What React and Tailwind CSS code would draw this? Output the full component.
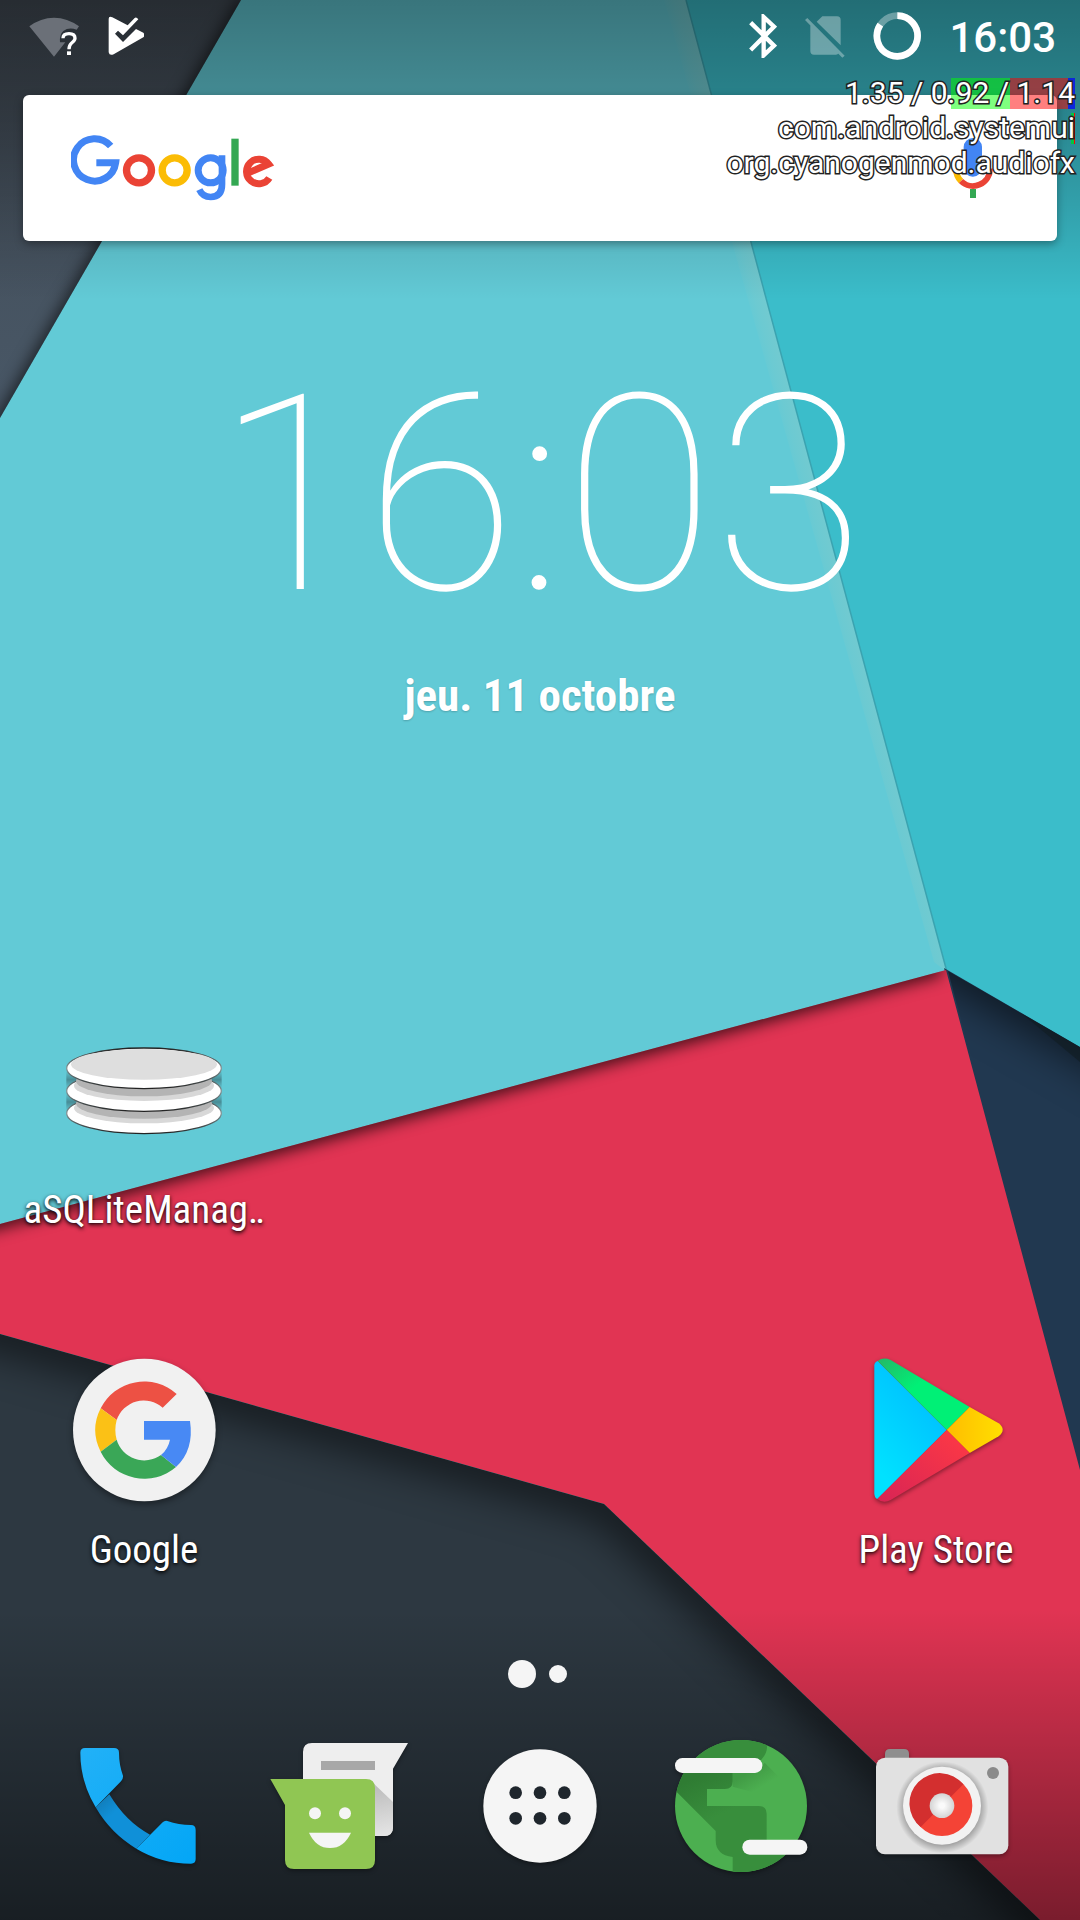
import React from "react";

const condensed = "font-['Roboto_Condensed','Liberation_Sans_Narrow',Roboto,sans-serif]";
const labelText =
  "mt-3 text-[39px] leading-[48px] text-white whitespace-nowrap [text-shadow:0_2px_4px_rgba(0,0,0,0.8),0_1px_2px_rgba(0,0,0,0.5)]";

function Wallpaper() {
  return (
    <svg
      className="absolute inset-0 h-full w-full"
      viewBox="0 0 1080 1920"
      preserveAspectRatio="none"
      aria-hidden="true"
    >
      <defs>
        <linearGradient id="slate" x1="0" y1="0" x2="0" y2="1">
          <stop offset="0" stopColor="#434c56" />
          <stop offset="1" stopColor="#485766" />
        </linearGradient>
        <linearGradient id="topScrim" x1="0" y1="0" x2="0" y2="1">
          <stop offset="0" stopColor="#000" stopOpacity="0.42" />
          <stop offset="0.4" stopColor="#000" stopOpacity="0.29" />
          <stop offset="1" stopColor="#000" stopOpacity="0" />
        </linearGradient>
        <linearGradient id="bottomScrim" x1="0" y1="0" x2="0" y2="1">
          <stop offset="0" stopColor="#000" stopOpacity="0" />
          <stop offset="1" stopColor="#000" stopOpacity="0.46" />
        </linearGradient>
        <linearGradient id="ridge" gradientUnits="userSpaceOnUse" x1="795" y1="490" x2="817" y2="484">
          <stop offset="0" stopColor="#62cad6" />
          <stop offset="0.5" stopColor="#6ccad2" />
          <stop offset="1" stopColor="#72cad0" />
        </linearGradient>
        <filter id="soft" filterUnits="userSpaceOnUse" x="-100" y="-100" width="1300" height="2140" colorInterpolationFilters="sRGB">
          <feGaussianBlur stdDeviation="8" />
        </filter>
        <filter id="wide" filterUnits="userSpaceOnUse" x="-100" y="-100" width="1300" height="2140" colorInterpolationFilters="sRGB">
          <feGaussianBlur stdDeviation="20" />
        </filter>
        <clipPath id="redClip">
          <polygon points="0,1224 946,970 1080,1470 1080,1920 1040,1920 604,1504 0,1334" />
        </clipPath>
        <clipPath id="darkClip">
          <polygon points="0,1334 604,1504 1040,1920 0,1920" />
        </clipPath>
        <clipPath id="navyClip">
          <polygon points="948,971 1080,1047 1080,1470" />
        </clipPath>
        <clipPath id="cornerClip">
          <polygon points="0,0 241,0 0,418" />
        </clipPath>
      </defs>
      <rect width="1080" height="1920" fill="#62cad6" />
      <polygon points="686,0 1080,0 1080,1048 947,972" fill="#3bbdca" />
      <polygon points="664,0 686,0 947,972 934,962" fill="url(#ridge)" />
      <line x1="686" y1="0" x2="947" y2="972" stroke="#3aa3b0" strokeWidth="1.5" />
      <polygon points="0,0 241,0 0,418" fill="url(#slate)" />
      <g clipPath="url(#cornerClip)">
        <line x1="249" y1="0" x2="-10" y2="448" stroke="#000" strokeOpacity="0.65" strokeWidth="18" filter="url(#soft)" />
      </g>
      <polygon points="944,968 1080,1047 1080,1480" fill="#213850" />
      <g clipPath="url(#navyClip)">
        <line x1="910" y1="930" x2="1150" y2="1068" stroke="#000" strokeOpacity="0.55" strokeWidth="60" filter="url(#wide)" />
        <polygon points="1020,1012 1080,1047 1080,1062" fill="#101c22" fillOpacity="0.6" />
      </g>
      <polygon points="0,1224 946,970 1080,1470 1080,1920 1040,1920 604,1504 0,1334" fill="#e13453" />
      <g clipPath="url(#redClip)">
        <line x1="-20" y1="1224" x2="940" y2="966" stroke="#000" strokeOpacity="0.75" strokeWidth="18" filter="url(#soft)" />
      </g>
      <polygon points="0,1334 604,1504 1040,1920 0,1920" fill="#2d3841" />
      <g clipPath="url(#darkClip)">
        <polyline points="-60,1312 608,1500 1110,1980" fill="none" stroke="#000" strokeOpacity="0.55" strokeWidth="44" filter="url(#wide)" />
      </g>
      <rect width="1080" height="300" fill="url(#topScrim)" />
      <rect y="1610" width="1080" height="310" fill="url(#bottomScrim)" />
    </svg>
  );
}

function StatusBar() {
  return (
    <header className="flex h-[72px] items-center justify-between pr-6 pl-7">
      <div className="flex items-center gap-7">
        <svg className="h-[42px] w-[52px]" viewBox="84 42 156 126" role="img" aria-label="Wi-Fi">
          <path
            d="M88 76Q122 50 162 50Q202 50 237 76L230 86Q206 78 190 90Q178 100 180 124H196L162 167Z"
            fill="#6b7078"
          />
          <path
            d="M189 112Q189 98 207 98Q225 98 225 112Q225 119 215 126Q207 132 207 145"
            fill="none"
            stroke="#fff"
            strokeWidth="10"
          />
          <rect x="201" y="151" width="12" height="11" fill="#fff" />
        </svg>
        <svg className="h-[42px] w-9" viewBox="325 45 108 126" role="img" aria-label="Update">
          <path
            d="M327 57Q327 47 338 52L384 76L405 54Q410 50 416 58L370 106L355 92L346 101L370 126L409 87L431 98Q438 105 431 112L342 163Q329 168 327 157Z"
            fill="#fff"
          />
        </svg>
      </div>
      <div className="flex items-center gap-7">
        <svg className="h-11 w-7" viewBox="210 43 84 132" role="img" aria-label="Bluetooth">
          <path
            d="M215 69L285 138L254 167V52L285 81L215 151"
            fill="none"
            stroke="#fff"
            strokeWidth="13"
          />
        </svg>
        <svg className="h-11 w-10" viewBox="373 43 120 132" role="img" aria-label="No SIM">
          <path
            d="M425 50H469Q480 50 480 61V137L408 66ZM389 73L473 161Q472 165 466 165H400Q389 165 389 154ZM380 55L492 168L485 174L373 61Z"
            fill="#fff"
            fillOpacity="0.33"
          />
        </svg>
        <svg className="h-12 w-12" viewBox="584 35 144 144" role="img" aria-label="Battery">
          <circle cx="657" cy="107" r="61" fill="none" stroke="#fff" strokeOpacity="0.33" strokeWidth="20" />
          <path d="M657 46A61 61 0 1 1 606 73" fill="none" stroke="#fff" strokeWidth="20" />
        </svg>
        <time className="pt-1 text-[42px] leading-none font-medium text-white">16:03</time>
      </div>
    </header>
  );
}

function GoogleLogo() {
  return (
    <svg className="h-[66px] w-[204px]" viewBox="212 404 612 198" fill="none" strokeWidth="21" role="img" aria-label="Google">
      <path d="M331 437A63.500 63.500 0 1 0 346 487H288" stroke="#4285f4" />
      <circle cx="416" cy="510" r="37.500" stroke="#ea4335" strokeWidth="22" />
      <circle cx="523" cy="510" r="37.500" stroke="#fbbc05" strokeWidth="22" />
      <circle cx="631" cy="510" r="37.500" stroke="#4285f4" />
      <path d="M665 465V552Q665 590 631 590Q607 590 597 568" stroke="#4285f4" strokeWidth="20" />
      <path d="M704 415V556" stroke="#34a853" strokeWidth="22" />
      <path d="M807 533A37 37 0 1 1 805 491L743 518" stroke="#ea4335" />
    </svg>
  );
}

function SearchBar() {
  return (
    <div className="mx-[23px] mt-[23px] flex h-[146px] items-center justify-between rounded-md bg-white pr-16 pl-12 shadow-[0_3px_8px_rgba(0,0,0,0.35)]">
      <button type="button" aria-label="Google">
        <GoogleLogo />
      </button>
      <button type="button" aria-label="Voice search">
        <svg className="h-[66px] w-10" viewBox="819 405 120 198" fill="none" aria-hidden="true">
          <rect x="851" y="414" width="55" height="116" rx="27" fill="#4285f4" />
          <path d="M828 506A51 51 0 0 0 843 543" stroke="#fbbc05" strokeWidth="18" />
          <path d="M843 543A51 51 0 0 0 930 506" stroke="#ea4335" strokeWidth="18" />
          <path d="M879 567V594" stroke="#34a853" strokeWidth="18" />
        </svg>
      </button>
    </div>
  );
}

function LoadOverlay() {
  const line =
    "relative text-right text-[30px] leading-[35px] text-white [paint-order:stroke_fill] [-webkit-text-stroke:3px_#222]";
  return (
    <aside className="pointer-events-none absolute top-[75px] right-[5px] z-10">
      <div className="absolute top-[3px] right-0 flex h-[31px]">
        <span className="w-[59px] bg-[#00ff00]/50" />
        <span className="w-[58px] bg-[#ff0000]/50" />
        <span className="w-[7px] bg-[#0000ff]/70" />
      </div>
      <div className="absolute top-[38px] right-0 flex h-[31px]">
        <span className="w-[3px] bg-[#00c840]" />
        <span className="w-[1px] bg-[#ff0000]" />
      </div>
      <p className={line}>1.35 / 0.92 / 1.14</p>
      <p className={line}>com.android.systemui</p>
      <p className={line}>org.cyanogenmod.audiofx</p>
    </aside>
  );
}

function DatabaseIcon() {
  return (
    <svg className="h-[168px] w-[168px]" viewBox="180 -42 504 504" aria-hidden="true">
      <defs>
        <linearGradient id="rim" x1="0" y1="0" x2="0" y2="1">
          <stop offset="0" stopColor="#222" />
          <stop offset="0.5" stopColor="#84979a" />
          <stop offset="1" stopColor="#222" />
        </linearGradient>
        <linearGradient id="gap" x1="0" y1="0" x2="0" y2="1">
          <stop offset="0" stopColor="#36626a" stopOpacity="0" />
          <stop offset="0.5" stopColor="#36626a" stopOpacity="0.6" />
          <stop offset="1" stopColor="#36626a" stopOpacity="0" />
        </linearGradient>
      </defs>
      {[280, 213].map((cy) => (
        <g key={cy}>
          <path d={`M199 ${cy - 62}H665V${cy - 6}H199Z`} fill="url(#gap)" />
          <ellipse cx="432" cy={cy} rx="232" ry="61" fill="#fff" stroke="url(#rim)" strokeWidth="4" />
          <ellipse cx="432" cy={cy - 16} rx="210" ry="46" fill="#d8d8d8" />
          <ellipse cx="432" cy={cy - 30} rx="204" ry="46" fill="#b4b4b4" />
        </g>
      ))}
      <ellipse cx="432" cy="145" rx="232" ry="61" fill="#fff" stroke="url(#rim)" strokeWidth="4" />
      <ellipse cx="432" cy="133" rx="219" ry="46" fill="#dedede" />
    </svg>
  );
}

function GoogleIcon() {
  return (
    <svg className="h-[168px] w-[168px] drop-shadow-[0_3px_3px_rgba(0,0,0,0.4)]" viewBox="60 48 504 504" aria-hidden="true">
      <circle cx="313" cy="300" r="214" fill="#f1f1f1" />
      <path d="M182 235A146 146 0 0 1 410 192L368 233A86 86 0 0 0 230 270Z" fill="#ed5144" />
      <path d="M182 235L230 270Q222 300 230 329L182 365Q149 300 182 235Z" fill="#fbc116" />
      <path d="M182 365L230 329A86 86 0 0 0 363 375L408 411A146 146 0 0 1 182 365Z" fill="#3aa757" />
      <path d="M312 273H450Q463 360 408 411L363 375Q384 358 390 329H312Z" fill="#4889f4" />
    </svg>
  );
}

function PlayIcon() {
  return (
    <svg className="h-[168px] w-[168px] drop-shadow-[0_2px_2px_rgba(0,0,0,0.4)]" viewBox="96 48 504 504" aria-hidden="true">
      <defs>
        <linearGradient id="playBlue" x1="1" y1="0" x2="0.4" y2="1">
          <stop offset="0" stopColor="#00b4ff" />
          <stop offset="1" stopColor="#00e2ff" />
        </linearGradient>
        <linearGradient id="playGreen" x1="0" y1="0" x2="1" y2="1">
          <stop offset="0" stopColor="#24b868" />
          <stop offset="0.4" stopColor="#00f076" />
        </linearGradient>
        <linearGradient id="playRed" x1="1" y1="0" x2="0" y2="1">
          <stop offset="0" stopColor="#ff3a44" />
          <stop offset="1" stopColor="#d82455" />
        </linearGradient>
        <linearGradient id="playYellow" x1="0" y1="0" x2="1" y2="0">
          <stop offset="0" stopColor="#ffbc00" />
          <stop offset="1" stopColor="#ffdf00" />
        </linearGradient>
      </defs>
      <path d="M173 93L380 300L172 507Q163 504 163 490V106Q163 97 173 93Z" fill="url(#playBlue)" />
      <path d="M173 93Q190 80 212 90L449 231L380 300Z" fill="url(#playGreen)" />
      <path d="M449 231L536 280Q560 299 536 319L449 369L380 300Z" fill="url(#playYellow)" />
      <path d="M380 300L449 369L212 510Q190 522 172 507Z" fill="url(#playRed)" />
    </svg>
  );
}

const dockSvg = "h-36 w-36 drop-shadow-[0_2px_2px_rgba(0,0,0,0.35)]";

function PhoneIcon() {
  return (
    <svg className={dockSvg} viewBox="78 282 432 432" aria-hidden="true">
      <defs>
        <linearGradient id="phoneFill" gradientUnits="userSpaceOnUse" x1="121" y1="324" x2="467" y2="671">
          <stop offset="0" stopColor="#22b1f7" />
          <stop offset="1" stopColor="#03a6f6" />
        </linearGradient>
        <linearGradient id="phoneGrip" gradientUnits="userSpaceOnUse" x1="187" y1="483" x2="220" y2="520">
          <stop offset="0" stopColor="#117fbd" />
          <stop offset="1" stopColor="#1090d8" />
        </linearGradient>
      </defs>
      <path d="M167 502L208 463Q258 546 330 584L289 626Q212 580 167 502Z" fill="url(#phoneGrip)" />
      <path
        d="M121 338Q121 324 135 324H222Q237 324 237 338Q237 374 249 407Q250 416 243 424L167 502Q121 425 121 338Z"
        fill="url(#phoneFill)"
      />
      <path
        d="M289 626L368 547Q374 541 382 543Q416 555 453 555Q467 555 467 570V657Q467 671 453 671Q364 671 289 626Z"
        fill="url(#phoneFill)"
      />
    </svg>
  );
}

function MessagesIcon() {
  return (
    <svg className={dockSvg} viewBox="681 282 432 432" aria-hidden="true">
      <defs>
        <linearGradient id="fold" gradientUnits="userSpaceOnUse" x1="1010" y1="440" x2="1040" y2="590">
          <stop offset="0" stopColor="#bdbdbd" />
          <stop offset="1" stopColor="#e6e6e6" />
        </linearGradient>
      </defs>
      <path d="M816 309H1104L1059 386V561Q1059 588 1032 588H789V336Q789 309 816 309Z" fill="#eee" />
      <path d="M990 420L1059 486V561Q1059 588 1032 588H990Z" fill="url(#fold)" />
      <rect x="843" y="363" width="162" height="27" fill="#a8a8a8" />
      <path d="M691 417H978Q1005 417 1005 444V660Q1005 687 978 687H762Q735 687 735 660V495Z" fill="#90c653" />
      <circle cx="825" cy="520" r="18" fill="#f5f5f5" />
      <circle cx="915" cy="520" r="18" fill="#f5f5f5" />
      <path d="M807 578H933Q912 624 870 624Q828 624 807 578Z" fill="#f5f5f5" />
    </svg>
  );
}

function AppsIcon() {
  return (
    <svg className={dockSvg} viewBox="84 282 432 432" aria-hidden="true">
      <circle cx="300" cy="498" r="170" fill="#f5f5f5" />
      {[458, 535].map((cy) =>
        [227, 300, 373].map((cx) => <circle key={`${cx}-${cy}`} cx={cx} cy={cy} r="19" fill="#1f262d" />)
      )}
    </svg>
  );
}

function BrowserIcon() {
  return (
    <svg className={dockSvg} viewBox="687 282 432 432" aria-hidden="true">
      <defs>
        <clipPath id="globe">
          <circle cx="903" cy="498" r="198" />
        </clipPath>
        <linearGradient id="globeShade" gradientUnits="userSpaceOnUse" x1="790" y1="400" x2="850" y2="520">
          <stop offset="0" stopColor="#2f7c33" />
          <stop offset="1" stopColor="#388e3c" />
        </linearGradient>
        <linearGradient id="barShade" gradientUnits="userSpaceOnUse" x1="970" y1="370" x2="1000" y2="420">
          <stop offset="0" stopColor="#419b45" />
          <stop offset="1" stopColor="#4caf50" />
        </linearGradient>
      </defs>
      <g clipPath="url(#globe)">
        <rect x="700" y="295" width="410" height="410" fill="#4caf50" />
        <path d="M974 368L1050 444L990 470L878 440V399H950Z" fill="url(#barShade)" />
        <path d="M700 295H981V322Q981 340 965 358L940 376H700Z" fill="#388e3c" />
        <path
          d="M700 376H878V424Q878 447 855 447H801V498H957Q980 498 980 521V621H1060L1000 700H878V651Q827 645 827 600V573L700 446Z"
          fill="url(#globeShade)"
        />
      </g>
      <rect x="705" y="354" width="262" height="45" rx="22" fill="#f5f5f5" />
      <rect x="907" y="599" width="195" height="45" rx="22" fill="#f5f5f5" />
    </svg>
  );
}

function CameraIcon() {
  return (
    <svg className={dockSvg} viewBox="150 102 432 432" aria-hidden="true">
      <defs>
        <radialGradient id="lens">
          <stop offset="0.2" stopColor="#fafafa" />
          <stop offset="1" stopColor="#d4d4d4" />
        </radialGradient>
        <radialGradient id="halo">
          <stop offset="0.8" stopColor="#000" stopOpacity="0.3" />
          <stop offset="1" stopColor="#000" stopOpacity="0" />
        </radialGradient>
      </defs>
      <path d="M195 180V162Q195 147 210 147H252Q267 147 267 162V180Z" fill="#8e8e8e" />
      <rect x="168" y="173" width="397" height="290" rx="27" fill="#e1e1e1" />
      <circle cx="367" cy="322" r="138" fill="url(#halo)" />
      <circle cx="366" cy="317" r="117" fill="#f2f2f2" />
      <circle cx="366" cy="317" r="91" fill="#f44336" />
      <path d="M430 253A91 91 0 1 0 302 381Z" fill="#d32f2f" />
      <circle cx="366" cy="317" r="37" fill="url(#lens)" />
      <circle cx="519" cy="219" r="18" fill="#8a8a8a" />
    </svg>
  );
}

function AppShortcut({ label, children, className }) {
  return (
    <button type="button" className={`flex flex-col items-center ${className}`}>
      {children}
      <span className={`${condensed} ${labelText}`}>{label}</span>
    </button>
  );
}

const dock = [
  ["Phone", PhoneIcon],
  ["Messages", MessagesIcon],
  ["Apps", AppsIcon],
  ["Browser", BrowserIcon],
  ["Camera", CameraIcon],
];

export default function App() {
  return (
    <div className="relative min-h-screen w-full overflow-hidden bg-[#2d3841] font-[Roboto,sans-serif]">
      <Wallpaper />
      <LoadOverlay />
      <div className="relative flex min-h-screen flex-col">
        <StatusBar />
        <SearchBar />
        <main className="flex flex-1 flex-col">
          <section className="mt-[118px] text-center text-white">
            <time className="block text-[274px] leading-none font-thin">16:03</time>
            <p className={`${condensed} mt-[35px] text-[45px] leading-[56px] font-bold [text-shadow:0_1px_2px_rgba(0,0,0,0.2)]`}>
              jeu. 11 octobre
            </p>
          </section>
          <section className="mt-auto grid grid-cols-4 gap-y-28 px-3">
            <AppShortcut label="aSQLiteManag‥" className="col-start-1">
              <DatabaseIcon />
            </AppShortcut>
            <AppShortcut label="Google" className="col-start-1">
              <GoogleIcon />
            </AppShortcut>
            <AppShortcut label="Play Store" className="col-start-4">
              <PlayIcon />
            </AppShortcut>
          </section>
        </main>
        <div className="mt-[86px] flex h-7 items-center justify-center gap-[13px] pr-[5px]">
          <span className="h-7 w-7 rounded-full bg-[#f5f5f5]" />
          <span className="h-[18px] w-[18px] rounded-full bg-[#f5f5f5]" />
        </div>
        <nav className="mt-[46px] mb-[42px] grid grid-cols-5 px-[37px]">
          {dock.map(([name, Icon]) => (
            <button key={name} type="button" aria-label={name} className="flex justify-center">
              <Icon />
            </button>
          ))}
        </nav>
      </div>
    </div>
  );
}
